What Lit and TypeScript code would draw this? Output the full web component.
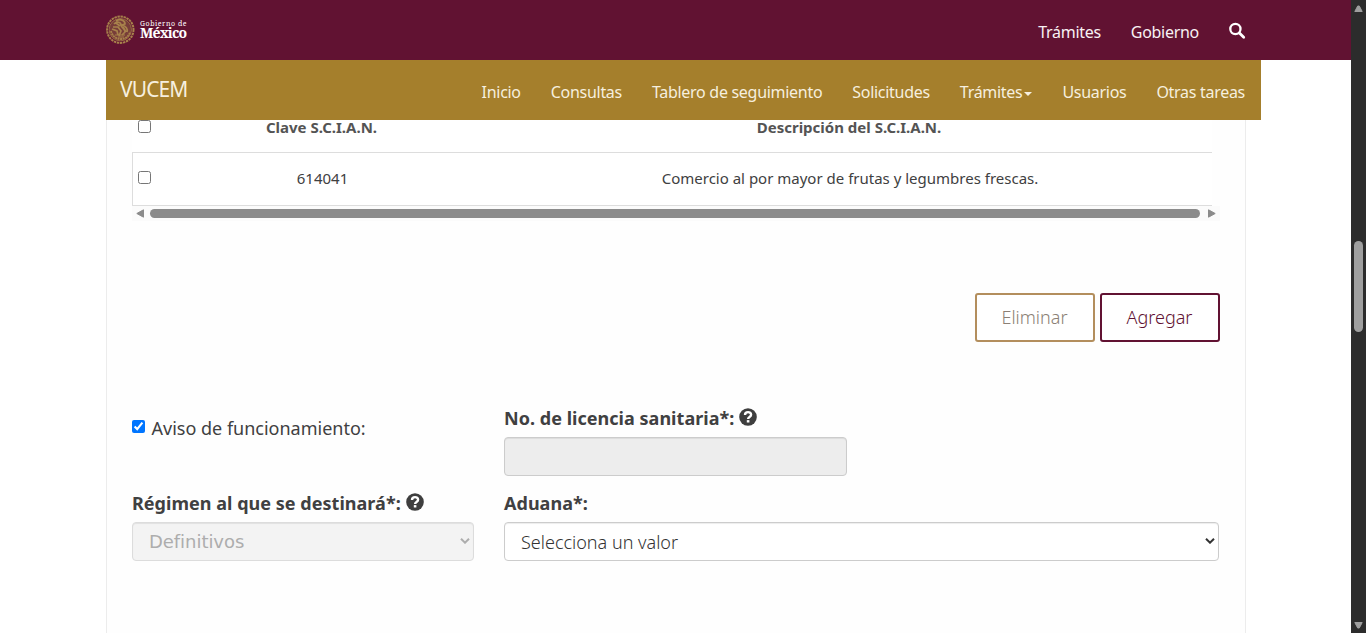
import { LitElement, html, css, svg } from "lit";
import { customElement } from "lit/decorators.js";

const help = html`<svg class="help" viewBox="0 0 18 18"><circle cx="9" cy="9" r="8.8" fill="#3e3e3e"/><path d="M6 6.9C6 3.1 12.1 3.3 12.1 6.7c0 2.3-3 2.2-3 4.2" fill="none" stroke="#fff" stroke-width="2.4"/><path d="M7.8 12.1h2.6v2.4H7.8z" fill="#fff"/></svg>`;
const chevron = html`<svg class="chev" viewBox="0 0 10 6"><path d="M1 .8 5 4.7 9 .8" fill="none" stroke="currentColor" stroke-width="2"/></svg>`;

@customElement("app-root")
export class AppRoot extends LitElement {
  static styles = css`
    :host { display: flex; width: 1366px; height: 633px; overflow: hidden; background: #fff;
      font-family: "Noto Sans", sans-serif; color: #404041; }
    * { box-sizing: border-box; }
    svg { display: block; flex: none; }
    .page { width: 1351px; height: 633px; display: flex; flex-direction: column; }
    .gov { height: 60px; flex: none; background: #611232; display: flex; justify-content: space-between; padding: 0 105px 0 106px; color: #fff; }
    .brand { display: flex; gap: 5px; padding-top: 15px; }
    .words { padding-top: 4px; font-family: "Noto Serif", "Liberation Serif", serif; font-weight: 700; white-space: nowrap; }
    .small { font-size: 7px; line-height: 9px; letter-spacing: .55px; font-weight: 400; }
    .big { font-size: 14px; line-height: 10px; letter-spacing: -.85px; }
    .links { display: flex; gap: 30px; font-size: 16px; line-height: 24px; letter-spacing: -.29px; padding-top: 20px; white-space: nowrap; }
    .gov .links { color: #f8f1f4; }
    .mag { margin: 2px 0 0; }
    .bar { height: 60px; flex: none; width: 1155px; margin-left: 106px; background: #a57f2c; color: #f6efdf; display: flex; justify-content: space-between; padding: 0 16px 0 14px; }
    .name { font-size: 21px; line-height: 28px; padding-top: 15px; letter-spacing: -.9px; }
    .bar .links { padding-top: 20px; }
    .drop { display: flex; align-items: center; height: 24px; gap: 2px; }
    .caret { border: 4px solid transparent; border-top-color: currentColor; border-bottom: 0; margin-top: 4px; }
    .panel { flex: 1; width: 1140px; margin-left: 106px; padding: 0 25px; border: 1px solid #ececec; border-width: 0 1px; background: #fefefe; }
    .table { width: 1080px; font-size: 15px; line-height: 20px; }
    .row { display: grid; grid-template-columns: 32px 315px 1fr; text-align: center; height: 54px; padding-top: 15px; background: #fff; border: 1px solid #ddd; border-right: 0; }
    .row > :last-child { padding-left: 8px; }
    .row.head { height: 32px; padding-top: 0; border: 0; font-weight: 700; color: #545454; }
    .row.head > div { line-height: 14px; }
    .row.head > :last-child { padding-left: 7px; }
    input { display: block; width: 13px; height: 13px; margin: 0; }
    .row input { margin: 3px 0 0 5px; }
    .row.head input { margin: 0 0 0 6px; }
    .hbar { display: flex; align-items: center; height: 15px; width: 1088px; padding: 0 4px; justify-content: space-between; background: #fbfbfb; }
    .thumb { width: 1050px; height: 9px; border-radius: 5px; background: #8b8b8b; margin-right: 2px; }
    .buttons { display: flex; justify-content: flex-end; gap: 5px; padding-top: 72px; width: 1088px; }
    button { width: 120px; height: 49px; border: 2px solid #b38e5d; border-radius: 3px; background: #fff; font: 300 18px/25px "Noto Sans", sans-serif; padding: 0 1px 0 0; }
    .eliminar { color: #8b7f75; }
    .agregar { border-color: #611232; color: #611232; }
    .form { display: grid; grid-template-columns: 342px 715px; column-gap: 30px; grid-template-rows: 85px 85px; padding-top: 64px; font-size: 18px; line-height: 25px; white-space: nowrap; }
    .aviso { display: flex; gap: 6.5px; padding-top: 10px; }
    .aviso input { margin-top: 4px; }
    .label { display: flex; gap: 5px; font-weight: 700; height: 31px; letter-spacing: .03px; }
    .help { width: 18px; height: 18px; margin-top: 2px; }
    .field { height: 39px; border: 1px solid #ccc; border-radius: 4px; background: #fff; box-shadow: inset 0 1px 1px rgba(0,0,0,.075); display: flex; align-items: center; justify-content: space-between; padding: 0 3px 0 16px; font-weight: 300; color: #333; }
    .field span { padding-top: 2px; }
    .field.off span { padding-top: 0; }
    .lic { width: 343px; background: #ededed; }
    .off { background: #f3f3f3; border-color: #dcdcdc; color: #adadad; font-family: "DejaVu Sans", sans-serif; font-weight: 400; letter-spacing: -.05px; }
    .chev { width: 10px; height: 6px; margin-bottom: 1px; }
    .vbar { width: 15px; height: 633px; background: #2c2c2c; display: flex; flex-direction: column; align-items: center; padding: 5px 0 4px; }
    .vthumb { width: 9px; height: 91px; border-radius: 5px; background: #9f9f9f; margin: 229px 0 auto; }
  `;

  seal() {
    return html`<svg width="29" height="30" viewBox="0 0 29 30" fill="none" stroke="#a7814b">
      <circle cx="14.3" cy="14.7" r="13.2" stroke-width="2" stroke-dasharray="2.4 .7"/>
      <circle cx="14.3" cy="14.7" r="11.2" fill="#8a6040" fill-opacity=".55" stroke-width=".7"/>
      <path d="M5 16c1 5 5 8 10 8s8-3 9-7" stroke-width="1.9" stroke-dasharray="2 .6"/>
      <path d="M10 6c5-3 9 0 9 3l-3 1c4 1 6 4 5 7M8 9c3-3 7-2 7 1s4 3 4 7l-3 3M7 12l5 0 3 4-2 5M6 14l5 2 1 4M17 12l3 5M10 8l4 3" stroke-width="1.7"/>
      <path d="M9 20h10M12 22h6" stroke-width="1.2"/></svg>`;
  }

  tri(points: string, w: number, h: number, color = "#9f9f9f") {
    return html`<svg width=${w} height=${h} viewBox="0 0 ${w} ${h}">${svg`<path d=${points} fill=${color} stroke=${color} stroke-linejoin="round"/>`}</svg>`;
  }

  render() {
    return html`
      <div class="page">
        <header class="gov">
          <div class="brand">${this.seal()}<div class="words"><div class="small">Gobierno de</div><div class="big">México</div></div></div>
          <nav class="links"><span>Trámites</span><span>Gobierno</span>
            <svg class="mag" width="17" height="18" viewBox="0 0 17 18" fill="none" stroke="#fff"><circle cx="6.4" cy="7" r="5.1" stroke-width="2.3"/><path d="m10.4 11 4.3 4.2" stroke-width="2.8" stroke-linecap="round"/></svg>
          </nav>
        </header>
        <div class="bar">
          <div class="name">VUCEM</div>
          <nav class="links"><span>Inicio</span><span>Consultas</span><span>Tablero de seguimiento</span><span>Solicitudes</span><span class="drop">Trámites<i class="caret"></i></span><span>Usuarios</span><span>Otras tareas</span></nav>
        </div>
        <main class="panel">
          <div class="table">
            <div class="row head"><input type="checkbox"><div>Clave S.C.I.A.N.</div><div>Descripción del S.C.I.A.N.</div></div>
            <div class="row"><input type="checkbox"><div>614041</div><div>Comercio al por mayor de frutas y legumbres frescas.</div></div>
          </div>
          <div class="hbar">${this.tri("M7.5 .8v7.4L.8 4.5z", 8, 9, "#8b8b8b")}<div class="thumb"></div>${this.tri("M.5 .8v7.4l6.7-3.7z", 8, 9, "#8b8b8b")}</div>
          <div class="buttons"><button class="eliminar">Eliminar</button><button class="agregar">Agregar</button></div>
          <div class="form">
            <div class="aviso"><input type="checkbox" checked><span>Aviso de funcionamiento:</span></div>
            <div><div class="label"><span>No. de licencia sanitaria*:</span>${help}</div><div class="field lic"></div></div>
            <div><div class="label"><span>Régimen al que se destinará*:</span>${help}</div><div class="field off"><span>Definitivos</span>${chevron}</div></div>
            <div><div class="label"><span>Aduana*:</span></div><div class="field"><span>Selecciona un valor</span>${chevron}</div></div>
          </div>
        </main>
      </div>
      <div class="vbar">${this.tri("M.8 6.5h7.4L5.3 1H3.7z", 9, 7)}<div class="vthumb"></div>${this.tri("M.8 .5h7.4L5.3 6H3.7z", 9, 7)}</div>`;
  }
}
